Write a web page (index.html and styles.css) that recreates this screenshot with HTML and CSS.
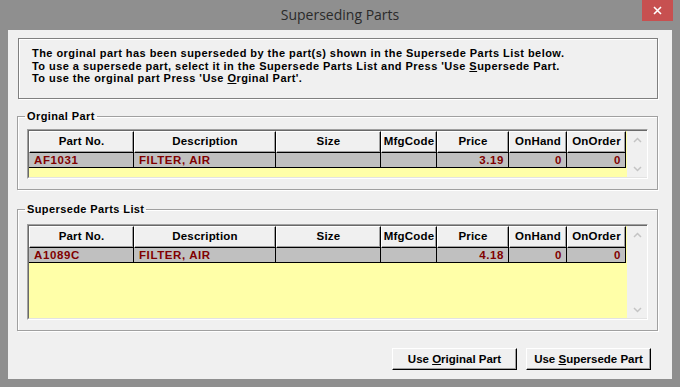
FILE: index.html
```html
<!DOCTYPE html>
<html lang="en">
  <head>
    <meta charset="UTF-8" />
    <title>Superseding Parts</title>
    <link rel="stylesheet" href="styles.css">
  </head>
  <body>
    <div class="win">
      <div class="win__bar">
        <div class="win__title">Superseding Parts</div>
        <button class="win__close" aria-label="Close">
          <svg width="9" height="9" viewBox="0 0 9 9">
            <path d="M1 1 L8 8 M8 1 L1 8" stroke="#fff" stroke-width="1.6" fill="none" />
          </svg>
        </button>
      </div>
      <div class="win__client">
        <div class="info">
          <div>The orginal part has been superseded by the part(s) shown in the Supersede Parts List below.</div>
          <div>To use a supersede part, select it in the Supersede Parts List and Press 'Use <u>S</u>upersede Part.</div>
          <div>To use the orginal part Press 'Use <u>O</u>rginal Part'.</div>
        </div>

        <fieldset class="group group--orig">
          <legend class="group__label">Orginal Part</legend>
          <div class="grid grid--short">
            <div class="grid__main">
              <div class="grid__head">
                <div class="grid__hcell">Part No.</div>
                <div class="grid__hcell">Description</div>
                <div class="grid__hcell">Size</div>
                <div class="grid__hcell">MfgCode</div>
                <div class="grid__hcell">Price</div>
                <div class="grid__hcell">OnHand</div>
                <div class="grid__hcell">OnOrder</div>
              </div>
              <div class="grid__row">
                <div class="grid__cell">AF1031</div>
                <div class="grid__cell">FILTER, AIR</div>
                <div class="grid__cell"></div>
                <div class="grid__cell"></div>
                <div class="grid__cell grid__cell--num">3.19</div>
                <div class="grid__cell grid__cell--num">0</div>
                <div class="grid__cell grid__cell--num">0</div>
              </div>
              <div class="grid__fill"></div>
            </div>
            <div class="grid__scroll">
              <svg width="9" height="6" viewBox="0 0 9 6"><path d="M1 5 L4.5 1.5 L8 5" stroke="#c4c4c4" stroke-width="1.5" fill="none" /></svg>
              <svg width="9" height="6" viewBox="0 0 9 6"><path d="M1 1 L4.5 4.5 L8 1" stroke="#c4c4c4" stroke-width="1.5" fill="none" /></svg>
            </div>
          </div>
        </fieldset>

        <fieldset class="group group--list">
          <legend class="group__label">Supersede Parts List</legend>
          <div class="grid grid--tall">
            <div class="grid__main">
              <div class="grid__head">
                <div class="grid__hcell">Part No.</div>
                <div class="grid__hcell">Description</div>
                <div class="grid__hcell">Size</div>
                <div class="grid__hcell">MfgCode</div>
                <div class="grid__hcell">Price</div>
                <div class="grid__hcell">OnHand</div>
                <div class="grid__hcell">OnOrder</div>
              </div>
              <div class="grid__row">
                <div class="grid__cell">A1089C</div>
                <div class="grid__cell">FILTER, AIR</div>
                <div class="grid__cell"></div>
                <div class="grid__cell"></div>
                <div class="grid__cell grid__cell--num">4.18</div>
                <div class="grid__cell grid__cell--num">0</div>
                <div class="grid__cell grid__cell--num">0</div>
              </div>
              <div class="grid__fill"></div>
            </div>
            <div class="grid__scroll">
              <svg width="9" height="6" viewBox="0 0 9 6"><path d="M1 5 L4.5 1.5 L8 5" stroke="#c4c4c4" stroke-width="1.5" fill="none" /></svg>
              <svg width="9" height="6" viewBox="0 0 9 6"><path d="M1 1 L4.5 4.5 L8 1" stroke="#c4c4c4" stroke-width="1.5" fill="none" /></svg>
            </div>
          </div>
        </fieldset>

        <div class="actions">
          <button class="btn">Use <u>O</u>riginal Part</button>
          <button class="btn">Use <u>S</u>upersede Part</button>
        </div>
      </div>
    </div>
  </body>
</html>
```

FILE: styles.css
```css
*,
*::before,
*::after {
  box-sizing: border-box;
  margin: 0;
  padding: 0;
}

:root {
  --frame: #8f8f8f;
  --face: #f0f0f0;
  --shadow: #a0a0a0;
  --dark: #696969;
  --yellow: #ffffa8;
  --row: #c0c0c0;
  --maroon: #800000;
}
body {
  background: var(--frame);
  font-family: "Liberation Sans", Arial, sans-serif;
  font-size: 11px;
  font-weight: bold;
  color: #000;
}
.win {
  width: 680px;
  height: 387px;
  background: var(--frame);
}
.win__bar {
  display: flex;
  height: 30px;
  padding-left: 38px;
}
.win__title {
  flex: 1;
  text-align: center;
  font-family: "Open Sans", "Noto Sans", sans-serif;
  font-weight: normal;
  font-size: 14px;
  line-height: 30px;
  color: #2a2a2a;
}
.win__close {
  width: 31px;
  height: 21px;
  margin-right: 7px;
  border: none;
  background: #c75050;
  display: flex;
  align-items: center;
  justify-content: center;
}
.win__client {
  margin: 0 8px;
  height: 349px;
  background: var(--face);
  padding: 8px 14px 0 9px;
}

/* message box */
.info {
  margin-left: 1px;
  height: 61px;
  border: 1px solid #7f7f7f;
  box-shadow: 1px 1px 0 #fff, inset 1px 1px 0 #fff;
  padding: 8px 13px 0;
  line-height: 12.5px;
  letter-spacing: 0.45px;
  white-space: nowrap;
}

/* group boxes */
.group {
  border: 1px solid var(--shadow);
  box-shadow: 1px 1px 0 #fff, inset 1px 1px 0 #fff;
  padding: 6px 9px 10px;
  min-width: 0;
}
.group--orig {
  margin-top: 11px;
}
.group--list {
  margin-top: 13px;
  padding-top: 8px;
}
.group__label {
  padding: 0 2px;
  margin-left: -2px;
  line-height: 13px;
  letter-spacing: 0.4px;
}

/* data grid */
.grid {
  display: flex;
  border: 1px solid;
  border-color: var(--shadow) #fff #fff var(--shadow);
}
.grid--short {
  height: 50px;
}
.grid--tall {
  height: 96px;
}
.grid__main {
  display: flex;
  flex-direction: column;
  width: 599px;
  border: 1px solid;
  border-right: none;
  border-color: var(--dark) #e3e3e3 #e3e3e3 var(--dark);
  background: var(--yellow);
}
.grid__head,
.grid__row {
  display: grid;
  grid-template-columns: 105px 142px 105px 56px 72px 58px 59px;
}
.grid__hcell {
  height: 22px;
  background: var(--face);
  border: 1px solid;
  border-color: #fff #000 #000 #fff;
  box-shadow: inset -1px -1px 0 var(--shadow);
  text-align: center;
  line-height: 19px;
  font-size: 11.5px;
  letter-spacing: 0.2px;
}
.grid__cell {
  height: 15px;
  background: var(--row);
  color: var(--maroon);
  border-right: 1px solid #000;
  border-bottom: 1px solid #000;
  padding: 0 5px;
  line-height: 14px;
  font-size: 11.5px;
  letter-spacing: 0.6px;
  white-space: nowrap;
}
.grid__cell--num {
  text-align: right;
  padding-right: 4px;
}
.grid__fill {
  flex: 1;
}
.grid__scroll {
  width: 20px;
  background: var(--face);
  border-top: 1px solid var(--dark);
  border-bottom: 1px solid #e3e3e3;
  display: flex;
  flex-direction: column;
  align-items: center;
  justify-content: space-between;
  padding: 6px 0 5px;
}

/* buttons */
.actions {
  display: flex;
  justify-content: flex-end;
  gap: 9px;
  margin-top: 17px;
  padding-right: 7px;
}
.btn {
  width: 125px;
  height: 22px;
  font: inherit;
  font-size: 11.5px;
  background: var(--face);
  border: 1px solid;
  border-color: #fff #000 #000 #fff;
  box-shadow: inset -1px -1px 0 var(--shadow);
}
```
